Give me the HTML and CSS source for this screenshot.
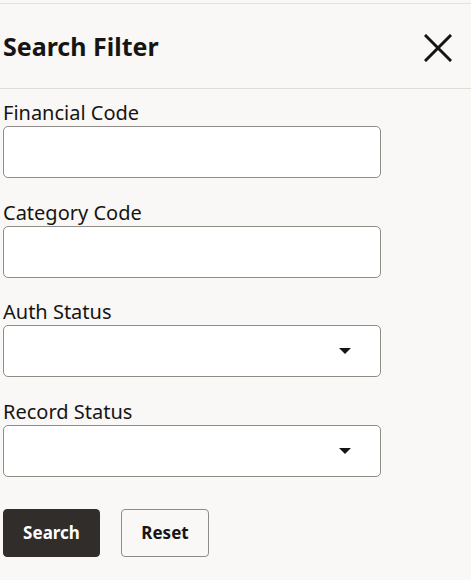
FILE: index.html
```html
<!DOCTYPE html>
<html lang="en">
<head>
<meta charset="utf-8">
<title>Search Filter</title>
<link rel="stylesheet" href="styles.css">
</head>
<body>
<div class="panel">
  <header class="panel-header">
    <h1 class="panel-title">Search Filter</h1>
    <button class="close-btn" type="button" aria-label="Close">
      <svg width="28" height="28" viewBox="0 0 28 28" aria-hidden="true">
        <path d="M2 2 L26 26 M26 2 L2 26" stroke="#161513" stroke-width="3" stroke-linecap="square" fill="none"/>
      </svg>
    </button>
  </header>
  <form class="filter-form">
    <div class="field">
      <label class="field-label">Financial Code</label>
      <div class="input"></div>
    </div>
    <div class="field">
      <label class="field-label">Category Code</label>
      <div class="input"></div>
    </div>
    <div class="field">
      <label class="field-label">Auth Status</label>
      <div class="input select"><span class="caret"></span></div>
    </div>
    <div class="field">
      <label class="field-label">Record Status</label>
      <div class="input select"><span class="caret"></span></div>
    </div>
    <div class="actions">
      <button type="button" class="btn btn-primary">Search</button>
      <button type="button" class="btn btn-outline">Reset</button>
    </div>
  </form>
</div>
</body>
</html>
```

FILE: styles.css
```css
* { box-sizing: border-box; }

html, body {
  margin: 0;
  padding: 0;
  background: #f9f8f6;
  font-family: "Noto Sans", "Open Sans", sans-serif;
  color: #161513;
}

.panel {
  width: 471px;
  height: 580px;
  padding-top: 3px;
  background: #f9f8f6;
}

.panel-header {
  display: flex;
  align-items: center;
  justify-content: space-between;
  height: 86px;
  border-top: 1px solid #e4e2de;
  border-bottom: 1px solid #dedcd8;
  padding: 0 19px 0 3px;
}

.panel-title {
  margin: 0;
  font-size: 25px;
  font-weight: 700;
  line-height: 32px;
  color: #161513;
}

.close-btn {
  border: 0;
  background: transparent;
  padding: 0;
  width: 28px;
  height: 28px;
  display: flex;
  margin-top: 4px;
}

.filter-form {
  padding: 11px 0 0 3px;
  display: flex;
  flex-direction: column;
}

.field {
  display: flex;
  flex-direction: column;
  height: 99.7px;
}

.field-label {
  font-size: 20px;
  line-height: 26px;
  height: 26px;
  color: #161513;
}

.input {
  width: 378px;
  height: 52px;
  background: #ffffff;
  border: 1px solid #8f8c88;
  border-radius: 5px;
  display: flex;
  align-items: center;
  justify-content: flex-end;
  padding-right: 29px;
}

.caret {
  width: 0;
  height: 0;
  border-left: 6.5px solid transparent;
  border-right: 6.5px solid transparent;
  border-top: 6px solid #161513;
}

.actions {
  display: flex;
  gap: 21px;
  margin-top: 10px;
}

.btn {
  height: 48px;
  border-radius: 4px;
  font-family: "Noto Sans", "Open Sans", sans-serif;
  font-size: 17px;
  font-weight: 700;
  padding: 0;
  cursor: pointer;
}

.btn-primary {
  width: 97px;
  background: #312d2a;
  color: #ffffff;
  border: 1px solid #312d2a;
}

.btn-outline {
  width: 88px;
  background: #f9f8f6;
  color: #161513;
  border: 1px solid #8f8c88;
}
```
